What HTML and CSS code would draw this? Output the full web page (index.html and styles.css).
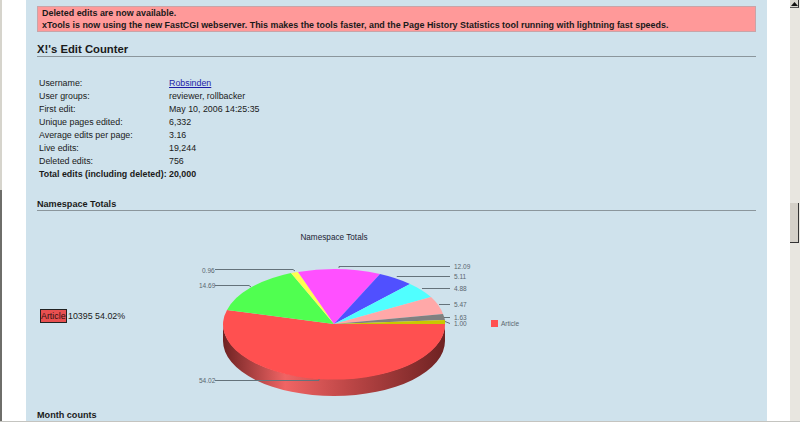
FILE: index.html
```html
<!DOCTYPE html>
<html lang="en">
<head>
    <meta charset="UTF-8">
    <title>X!'s Edit Counter</title>
    <link rel="stylesheet" href="styles.css">
</head>
<body>
    <div class="window">
        <div class="edge"></div>
        <div class="page">
            <div class="content">
                <div class="notice">
                    <b>Deleted edits are now available.</b><br>
                    <b>xTools is now using the new FastCGI webserver. This makes the tools faster, and the Page History Statistics tool running with lightning fast speeds.</b>
                </div>
                <h2>X!'s Edit Counter</h2>
                <table class="stats">
                    <tr><td>Username:</td><td><a href="#">Robsinden</a></td></tr>
                    <tr><td>User groups:</td><td>reviewer, rollbacker</td></tr>
                    <tr><td>First edit:</td><td>May 10, 2006 14:25:35</td></tr>
                    <tr><td>Unique pages edited:</td><td>6,332</td></tr>
                    <tr><td>Average edits per page:</td><td>3.16</td></tr>
                    <tr><td>Live edits:</td><td>19,244</td></tr>
                    <tr><td>Deleted edits:</td><td>756</td></tr>
                    <tr class="total"><td>Total edits (including deleted):</td><td>20,000</td></tr>
                </table>
                <h3>Namespace Totals</h3>
                <div class="chart-row">
                    <div class="key"><span class="key-name">Article</span> 10395 54.02%</div>
                    <svg class="chart" width="340" height="176" viewBox="190 225 340 176">
                        <defs>
                            <linearGradient id="rim" x1="222" x2="444" y1="0" y2="0" gradientUnits="userSpaceOnUse">
                                <stop offset="0" stop-color="#6e2222"/>
                                <stop offset="0.28" stop-color="#f06464"/>
                                <stop offset="0.55" stop-color="#c04848"/>
                                <stop offset="1" stop-color="#6e2222"/>
                            </linearGradient>
                        </defs>
                        <text class="chart-title" x="333" y="240" text-anchor="middle">Namespace Totals</text>

                        <path d="M222 324A111 55 0 0 0 444 324V341A111 55 0 0 1 222 341Z" fill="url(#rim)"/>

                        <path d="M333 324L226 310A111 55 0 1 0 444 324Z" fill="#ff5050"/>
                        <path d="M333 324L226 310A111 55 0 0 1 290 273Z" fill="#50ff50"/>
                        <path d="M333 324L290 273A111 55 0 0 1 297 272Z" fill="#ffff50"/>
                        <path d="M333 324L297 272A111 55 0 0 1 379 274Z" fill="#ff50ff"/>
                        <path d="M333 324L379 274A111 55 0 0 1 409 284Z" fill="#5050ff"/>
                        <path d="M333 324L409 284A111 55 0 0 1 430 297Z" fill="#50ffff"/>
                        <path d="M333 324L430 297A111 55 0 0 1 442 314Z" fill="#ffa8a8"/>
                        <path d="M333 324L442 314A111 55 0 0 1 444 320Z" fill="#808080"/>
                        <path d="M333 324L444 320A111 55 0 0 1 444 324Z" fill="#c8c800"/>

                        <g class="leader">
                            <path d="M338 268V266.5H449"/>
                            <path d="M396 277V276.5H449"/>
                            <path d="M421 288.5H449"/>
                            <path d="M438 304.5H449"/>
                            <path d="M443 317.5H449"/>
                            <path d="M444 321.5L449 323.5"/>
                            <path d="M294 271L292 269.5H214"/>
                            <path d="M250 287L248 285.5H214"/>
                            <path d="M318 379V380.5H214"/>
                        </g>
                        <g class="label">
                            <text x="453" y="268.5">12.09</text>
                            <text x="453" y="278.5">5.11</text>
                            <text x="453" y="291">4.88</text>
                            <text x="453" y="307">5.47</text>
                            <text x="453" y="319.5">1.63</text>
                            <text x="453" y="326">1.00</text>
                            <text x="201" y="272.5">0.96</text>
                            <text x="198" y="288">14.69</text>
                            <text x="198" y="382.5">54.02</text>
                        </g>
                        <rect x="490" y="320" width="7" height="7" fill="#ff5050"/>
                        <text class="label" x="500" y="326">Article</text>
                    </svg>
                </div>
                <h3 class="months">Month counts</h3>
            </div>
        </div>
        <div class="scrollbar">
            <div class="scroll-btn"><svg width="7" height="4" viewBox="0 0 7 4"><path d="M3.5 0L7 4H0Z" fill="#111"/></svg></div>
            <div class="scroll-thumb"></div>
        </div>
    </div>
</body>
</html>
```

FILE: styles.css
```css
html, body {
    margin: 0;
    height: 422px;
    overflow: hidden;
}
body {
    font-family: "Liberation Sans", Arial, sans-serif;
    font-size: 8.85px;
    color: #1a1a1a;
    background: #fff;
}
.window {
    display: flex;
    height: 422px;
    border-bottom: 1px solid #c4c4c0;
    box-sizing: border-box;
}
.edge {
    width: 2px;
    flex: none;
    background: linear-gradient(#d6d4cc 190px, #6e6e6a 190px);
}
.page {
    flex: 1;
    padding: 0 23px 0 24px;
    overflow: hidden;
}
.content {
    height: 422px;
    box-sizing: border-box;
    background: #cfe2ec;
    padding: 6px 11px 0;
    overflow: hidden;
}
.notice {
    background: #ff9999;
    border: 1px solid #c9a4a8;
    padding: 1px 4px 2px;
    height: 26px;
    box-sizing: border-box;
    font-size: 8.92px;
    line-height: 11.5px;
    white-space: nowrap;
}
h2 {
    font-size: 11.3px;
    line-height: 14px;
    margin: 10px 0 0;
    border-bottom: 1px solid #8b969c;
}
.stats {
    border-collapse: collapse;
    margin: 20px 0 0 1px;
    line-height: 13px;
}
.stats td {
    padding: 0 1px;
}
.stats td:first-child {
    width: 128px;
    white-space: nowrap;
}
.stats a {
    color: #1c1ca8;
}
.total td {
    font-weight: bold;
}
h3 {
    font-size: 9.1px;
    line-height: 12px;
    margin: 17px 0 0;
    border-bottom: 1px solid #8b969c;
}
.chart-row {
    display: flex;
    align-items: flex-start;
    height: 176px;
    margin-top: 14px;
}
.key {
    width: 151px;
    margin: 84px 0 0 3px;
    line-height: 14px;
    white-space: nowrap;
}
.key-name {
    background: #e85050;
    border: 1px solid #222;
    color: #301010;
    padding: 1px 0;
    margin-right: -1px;
}
.chart {
    display: block;
    flex: none;
}
.chart-title {
    font-size: 8.2px;
    fill: #223;
}
.leader path {
    fill: none;
    stroke: #64727a;
    stroke-width: 1;
}
.label, .label text {
    font-size: 6.5px;
    fill: #5a666e;
}
h3.months {
    border: 0;
    margin-top: 8px;
}
.scrollbar {
    width: 10px;
    flex: none;
    background: #e8e6e0;
    display: flex;
    flex-direction: column;
}
.scroll-btn {
    height: 8px;
    width: 9px;
    background: #d8d6ce;
    border-right: 1px solid #333;
    border-bottom: 1px solid #555;
    box-sizing: border-box;
    display: flex;
    align-items: center;
    justify-content: center;
}
.scroll-thumb {
    height: 40px;
    width: 9px;
    margin-top: 195px;
    background: #d4d0c8;
    border-right: 1px solid #333;
    border-bottom: 1px solid #333;
    box-sizing: border-box;
}
```
